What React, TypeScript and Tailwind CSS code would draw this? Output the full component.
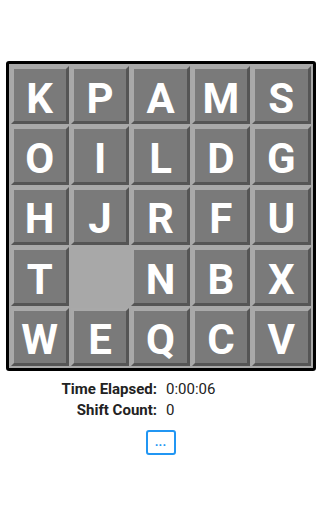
const rows = [
  ['K', 'P', 'A', 'M', 'S'],
  ['O', 'I', 'L', 'D', 'G'],
  ['H', 'J', 'R', 'F', 'U'],
  ['T', '', 'N', 'B', 'X'],
  ['W', 'E', 'Q', 'C', 'V'],
]

function Tile({ letter }: { letter: string }) {
  if (!letter) return <div className="h-full w-full bg-[#a8a8a8]" />
  return (
    <div className="flex h-full w-full items-center justify-center border-[3px] border-t-[#a9a9a9] border-l-[#a9a9a9] border-r-[#555555] border-b-[#555555] bg-[#7a7a7a] pt-[7px] text-[42px] font-bold leading-none text-white">
      {letter}
    </div>
  )
}

export default function App() {
  return (
    <div className="min-h-[512px] bg-white pt-[61px] font-['Roboto','Liberation_Sans',sans-serif]">
      {/* Board */}
      <div className="mx-auto h-[310px] w-[310px] rounded-[3px] border-[3px] border-black bg-[#a8a8a8] p-[2px]">
        <div className="grid h-full w-full grid-cols-5 grid-rows-5 gap-[2px]">
          {rows.flat().map((l, i) => (
            <Tile key={i} letter={l} />
          ))}
        </div>
      </div>

      {/* Stats */}
      <div className="mt-[8px] grid grid-cols-[157px_1fr] gap-x-[9px] text-[15px] leading-[21px] text-[#222]">
        <div className="text-right font-bold">Time Elapsed:</div>
        <div>0:00:06</div>
        <div className="text-right font-bold">Shift Count:</div>
        <div>0</div>
      </div>

      <div className="mt-[9px] flex justify-center">
        <button className="flex h-[25px] w-[30px] items-center justify-center rounded-[3px] border-2 border-[#2196f3] pb-[2px] text-[13px] font-bold leading-none text-[#2196f3]">
          ...
        </button>
      </div>
    </div>
  )
}
